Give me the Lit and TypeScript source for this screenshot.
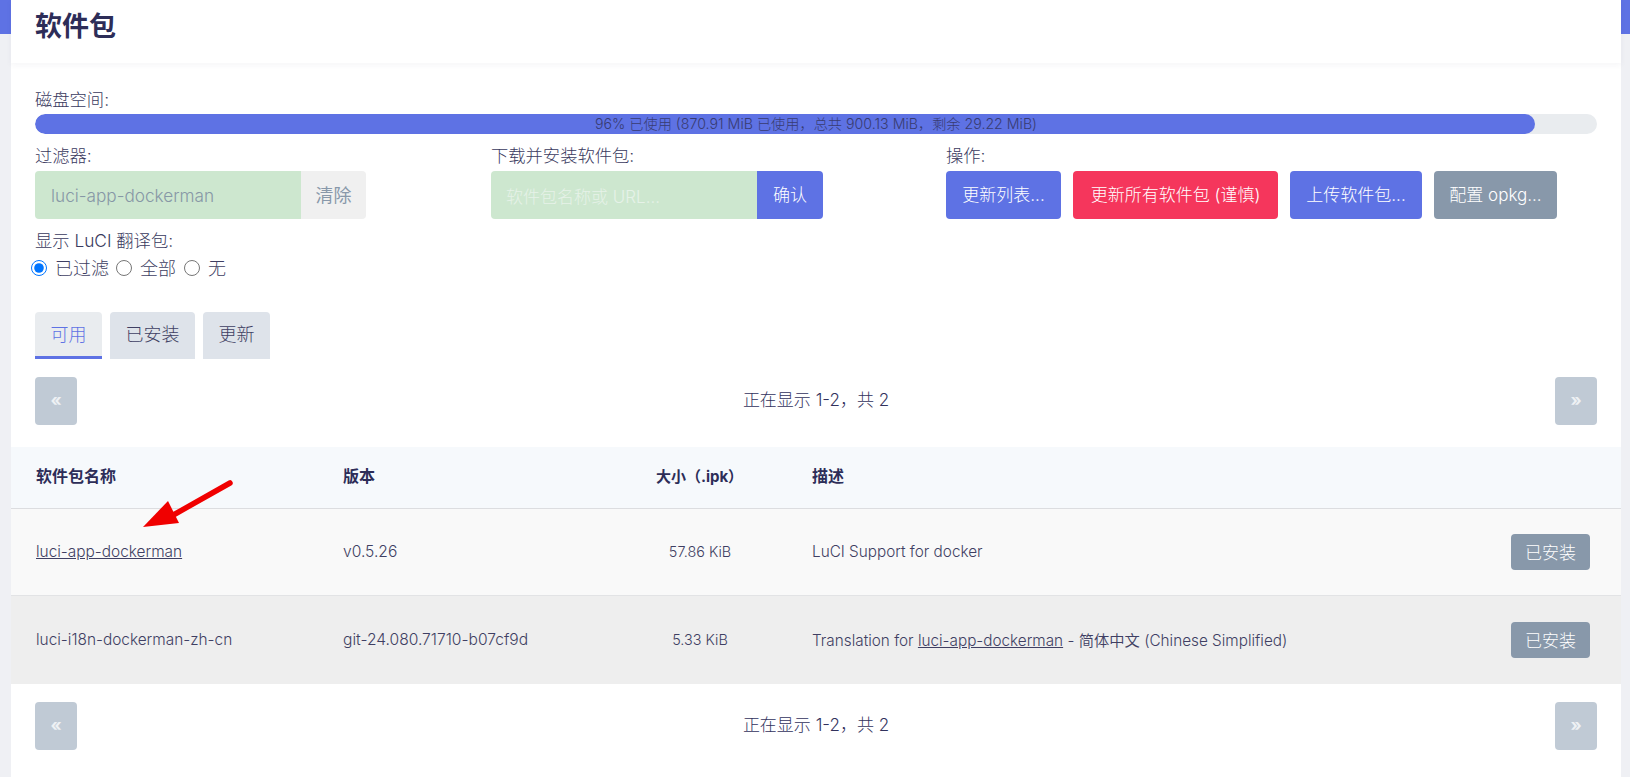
import { LitElement, html, css } from 'lit';
import { customElement } from 'lit/decorators.js';

const packages = [
  { name: 'luci-app-dockerman', link: true, version: 'v0.5.26', size: '57.86 KiB', shade: 'odd' },
  { name: 'luci-i18n-dockerman-zh-cn', link: false, version: 'git-24.080.71710-b07cf9d', size: '5.33 KiB', shade: 'even' },
];

@customElement('app-root')
export class AppRoot extends LitElement {
  static styles = css`
    :host {
      display: block;
      height: 777px;
      overflow: hidden;
      font-family: Inter, 'Noto Sans CJK SC', sans-serif;
      font-size: 15.3px;
      color: #3f3f63;
    }
    .page {
      height: 777px;
      box-sizing: border-box;
      padding: 0 9px 0 11px;
      background: linear-gradient(#5e72e4 34px, #eff0f4 34px);
    }
    .card {
      position: relative;
      height: 777px;
      background: #fff;
    }
    .head {
      height: 63px;
      box-sizing: border-box;
      padding: 10px 24px 0;
      box-shadow: 0 2px 6px rgba(50, 50, 93, 0.05);
    }
    h2 {
      margin: 0;
      font-size: 27px;
      line-height: 34px;
      font-weight: 700;
      color: #2d2d58;
    }
    .body {
      padding: 25px 24px 0;
    }
    .label {
      font-size: 17.3px;
      line-height: 24px;
      font-weight: 300;
      color: #3a3a5e;
    }
    .progress {
      position: relative;
      height: 20px;
      margin-top: 2px;
      border-radius: 10px;
      background: #e9ecef;
      overflow: hidden;
    }
    .fill {
      height: 100%;
      border-radius: 10px;
      background: #5e72e4;
    }
    .progress span {
      position: absolute;
      inset: 0;
      text-align: center;
      font-size: 14.2px;
      line-height: 19px;
      font-weight: 300;
      color: #32325d;
      opacity: 0.85;
    }
    .tools {
      display: grid;
      grid-template-columns: 456px 455px auto;
      margin-top: 10px;
    }
    .tool-row {
      display: flex;
      margin-top: 3px;
      height: 48px;
    }
    .input {
      box-sizing: border-box;
      display: flex;
      align-items: center;
      padding-left: 16px;
      font-size: 17.2px;
      background: #cde7cf;
      border-radius: 4px 0 0 4px;
    }
    .input.filter {
      width: 266px;
      color: #8797a6;
      font-weight: 300;
    }
    .input.url {
      width: 266px;
      padding-left: 15px;
      font-size: 17px;
      color: #e6f2e8;
      font-weight: 300;
    }
    .btn {
      display: flex;
      align-items: center;
      justify-content: center;
      box-sizing: border-box;
      height: 48px;
      padding-bottom: 3px;
      font-size: 17px;
      font-weight: 300;
      color: #fff;
      border-radius: 4px;
      white-space: nowrap;
    }
    .attached {
      border-radius: 0 4px 4px 0;
    }
    .clear {
      width: 65px;
      font-size: 18px;
      font-weight: 400;
      background: #f0f0f0;
      color: #8898aa;
    }
    .blue {
      background: #5e72e4;
    }
    .red {
      background: #f5365c;
    }
    .gray {
      background: #8898aa;
    }
    .confirm {
      width: 66px;
    }
    .actions {
      gap: 12px;
    }
    .w-list {
      width: 115px;
    }
    .w-all {
      width: 205px;
    }
    .w-upload {
      width: 132px;
    }
    .w-opkg {
      width: 123px;
    }
    .lang {
      margin-top: 10px;
    }
    .radios {
      display: flex;
      align-items: center;
      height: 24px;
      margin-top: 2px;
      font-size: 18px;
      font-weight: 300;
    }
    .radios input {
      width: 16px;
      height: 16px;
      margin: 1px 8px 0 0;
    }
    .radios label {
      display: flex;
      align-items: center;
      margin-right: 8px;
    }
    .radios label:first-child {
      margin-left: -4px;
      margin-right: 7px;
    }
    .tabs {
      display: flex;
      gap: 8px;
      margin-top: 33px;
    }
    .tab {
      box-sizing: border-box;
      height: 47px;
      padding-bottom: 6px;
      display: flex;
      align-items: center;
      justify-content: center;
      font-size: 18px;
      font-weight: 300;
      background: #dee3ea;
      border-radius: 4px 4px 0 0;
    }
    .tab.on {
      width: 67px;
      color: #5e72e4;
      background: #e9ecef;
      border-bottom: 3px solid #5e72e4;
      padding-bottom: 3px;
    }
    .w-installed {
      width: 85px;
    }
    .w-update {
      width: 67px;
    }
    .pager {
      display: flex;
      align-items: center;
      justify-content: space-between;
      height: 48px;
      font-size: 17px;
      font-weight: 300;
      color: #32325d;
    }
    .pager-text {
      padding-bottom: 6px;
    }
    .pager.top {
      margin-top: 18px;
    }
    .pager.bottom {
      margin: 18px 24px 0;
    }
    .page-btn {
      width: 42px;
      height: 48px;
      box-sizing: border-box;
      padding-bottom: 3px;
      display: flex;
      align-items: center;
      justify-content: center;
      font-weight: 700;
      font-size: 17px;
      color: #eef1f4;
      background: #c0cad5;
      border-radius: 4px;
    }
    .table {
      margin-top: 22px;
    }
    .row {
      display: grid;
      box-sizing: border-box;
      grid-template-columns: 307px 295px 174px 1fr 110px;
      align-items: center;
      font-weight: 350;
    }
    .row > div {
      padding-left: 25px;
      padding-bottom: 2px;
    }
    .row > .name {
      font-size: 15.4px;
    }
    .row > .version {
      font-size: 15.6px;
    }
    .row > .size {
      padding-left: 0;
      text-align: center;
      font-size: 14.4px;
    }
    .row.header {
      height: 62px;
      background: #f6f9fc;
      border-bottom: 1px solid #dcdde0;
      font-weight: 700;
      font-size: 16px;
      color: #2d2d58;
    }
    .row.header > div {
      padding-bottom: 5px;
    }
    .row.header > .size {
      font-size: 15px;
      padding-right: 1px;
    }
    .row.odd {
      height: 87px;
      background: #f9f9f9;
      border-bottom: 1px solid #e2e3e5;
    }
    .row.even {
      height: 88px;
      background: #eeeeee;
    }
    .row a {
      color: inherit;
      text-decoration: underline;
    }
    .row > .cell-btn {
      padding-left: 0;
      padding-bottom: 0;
    }
    .installed {
      width: 79px;
      height: 36px;
      padding-bottom: 1px;
    }
    .arrow {
      position: absolute;
      left: 0;
      top: 0;
      pointer-events: none;
    }
  `;

  pager(cls: string) {
    return html`
      <div class="pager ${cls}">
        <div class="page-btn">«</div>
        <div class="pager-text">正在显示 1-2，共 2</div>
        <div class="page-btn">»</div>
      </div>
    `;
  }

  render() {
    return html`
      <div class="page">
        <div class="card">
          <div class="head"><h2>软件包</h2></div>
          <div class="body">
            <div class="label">磁盘空间:</div>
            <div class="progress">
              <div class="fill" style="width: 96%"></div>
              <span>96% 已使用 (870.91 MiB 已使用，总共 900.13 MiB，剩余 29.22 MiB)</span>
            </div>
            <div class="tools">
              <div>
                <div class="label">过滤器:</div>
                <div class="tool-row">
                  <div class="input filter">luci-app-dockerman</div>
                  <div class="btn attached clear">清除</div>
                </div>
              </div>
              <div>
                <div class="label">下载并安装软件包:</div>
                <div class="tool-row">
                  <div class="input url">软件包名称或 URL...</div>
                  <div class="btn attached blue confirm">确认</div>
                </div>
              </div>
              <div>
                <div class="label">操作:</div>
                <div class="tool-row actions">
                  <div class="btn blue w-list">更新列表...</div>
                  <div class="btn red w-all">更新所有软件包 (谨慎)</div>
                  <div class="btn blue w-upload">上传软件包...</div>
                  <div class="btn gray w-opkg">配置 opkg...</div>
                </div>
              </div>
            </div>
            <div class="label lang">显示 LuCI 翻译包:</div>
            <div class="radios">
              <label><input type="radio" name="lang" checked />已过滤</label>
              <label><input type="radio" name="lang" />全部</label>
              <label><input type="radio" name="lang" />无</label>
            </div>
            <div class="tabs">
              <div class="tab on">可用</div>
              <div class="tab w-installed">已安装</div>
              <div class="tab w-update">更新</div>
            </div>
            ${this.pager('top')}
          </div>
          <div class="table">
            <div class="row header">
              <div>软件包名称</div>
              <div>版本</div>
              <div class="size">大小（.ipk）</div>
              <div>描述</div>
              <div></div>
            </div>
            ${packages.map(p => html`
              <div class="row ${p.shade}">
                <div class="name">${p.link ? html`<a href="#">${p.name}</a>` : p.name}</div>
                <div class="version">${p.version}</div>
                <div class="size">${p.size}</div>
                <div>
                  ${p.link
                    ? 'LuCI Support for docker'
                    : html`Translation for <a href="#">luci-app-dockerman</a> - 简体中文 (Chinese Simplified)`}
                </div>
                <div class="cell-btn"><div class="btn gray installed">已安装</div></div>
              </div>
            `)}
          </div>
          ${this.pager('bottom')}
          <svg class="arrow" width="300" height="560" viewBox="11 0 300 560">
            <path d="M230 483 L168 518" stroke="#f00000" stroke-width="5.5" stroke-linecap="round" fill="none" />
            <path d="M143 527 L168 501 L179 523 Z" fill="#f00000" />
          </svg>
        </div>
      </div>
    `;
  }
}
